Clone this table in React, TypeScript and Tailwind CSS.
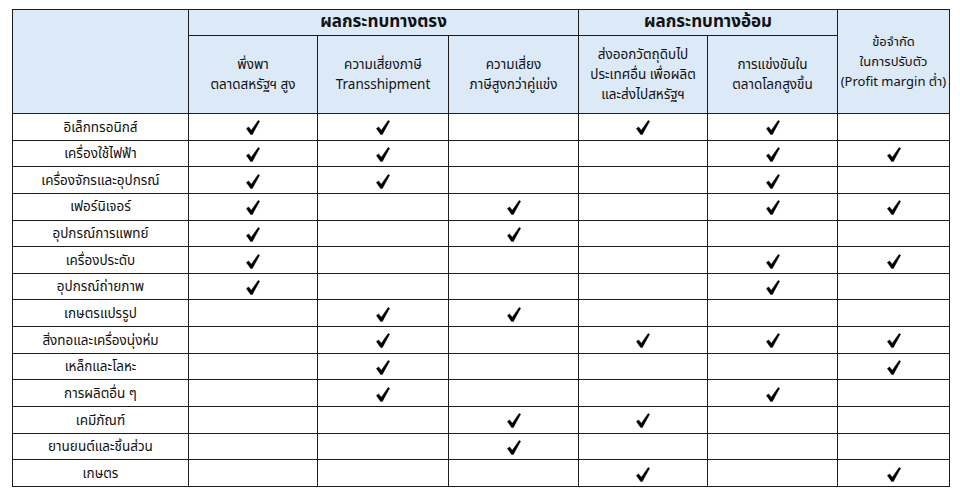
import React from "react";

const rows: [string, number[]][] = [
  ["อิเล็กทรอนิกส์", [1, 2, 4, 5]],
  ["เครื่องใช้ไฟฟ้า", [1, 2, 5, 6]],
  ["เครื่องจักรและอุปกรณ์", [1, 2, 5]],
  ["เฟอร์นิเจอร์", [1, 3, 5, 6]],
  ["อุปกรณ์การแพทย์", [1, 3]],
  ["เครื่องประดับ", [1, 5, 6]],
  ["อุปกรณ์ถ่ายภาพ", [1, 5]],
  ["เกษตรแปรรูป", [2, 3]],
  ["สิ่งทอและเครื่องนุ่งห่ม", [2, 4, 5, 6]],
  ["เหล็กและโลหะ", [2, 6]],
  ["การผลิตอื่น ๆ", [2, 5]],
  ["เคมีภัณฑ์", [3, 4]],
  ["ยานยนต์และชิ้นส่วน", [3]],
  ["เกษตร", [4, 6]],
];

function Check() {
  return (
    <svg width="14" height="15" viewBox="0 0 12.5 13.5" className="inline-block">
      <path
        d="M0.3 7.7 L2.3 6.2 L4.7 9.3 L10.9 0.4 L12.2 1.1 L5.7 13 L4.1 13 Z"
        fill="#000"
        stroke="#000"
        strokeWidth="0.4"
        strokeLinejoin="round"
      />
    </svg>
  );
}

const font = { fontFamily: '"Noto Sans Thai", Tahoma, "Leelawadee UI", "Noto Sans", sans-serif' };

export default function App() {
  const cell = "border border-[#1c1c1c] text-center align-middle p-0";
  const head = cell + " bg-[#dce9f6]";
  const sub = head + " text-[13.5px] font-normal leading-[20px]";
  return (
    <div className="w-[960px] h-[500px] bg-white pt-[9px] pl-[12px]" style={font}>
      <table className="table-fixed border-collapse text-[#111]">
        <colgroup>
          <col className="w-[176px]" />
          <col className="w-[129px]" />
          <col className="w-[131px]" />
          <col className="w-[130px]" />
          <col className="w-[129px]" />
          <col className="w-[130px]" />
          <col className="w-[112px]" />
        </colgroup>
        <thead>
          <tr className="h-[26px]">
            <th rowSpan={2} className={head}></th>
            <th colSpan={3} className={head + " text-[17px] font-bold leading-none"}>
              ผลกระทบทางตรง
            </th>
            <th colSpan={2} className={head + " text-[17px] font-bold leading-none"}>
              ผลกระทบทางอ้อม
            </th>
            <th rowSpan={2} className={head + " text-[13px] font-normal leading-[20px]"}>
              ข้อจำกัด
              <br />
              ในการปรับตัว
              <br />
              (Profit margin ต่ำ)
            </th>
          </tr>
          <tr className="h-[78px]">
            <th className={sub}>
              พึ่งพา
              <br />
              ตลาดสหรัฐฯ สูง
            </th>
            <th className={sub}>
              ความเสี่ยงภาษี
              <br />
              Transshipment
            </th>
            <th className={sub}>
              ความเสี่ยง
              <br />
              ภาษีสูงกว่าคู่แข่ง
            </th>
            <th className={sub}>
              ส่งออกวัตถุดิบไป
              <br />
              ประเทศอื่น เพื่อผลิต
              <br />
              และส่งไปสหรัฐฯ
            </th>
            <th className={sub}>
              การแข่งขันใน
              <br />
              ตลาดโลกสูงขึ้น
            </th>
          </tr>
        </thead>
        <tbody>
          {rows.map(([name, cols]) => (
            <tr key={name} className="h-[26.65px]">
              <td className={cell + " text-[13.5px] leading-none pt-[3px]"}>{name}</td>
              {[1, 2, 3, 4, 5, 6].map((c) => (
                <td key={c} className={cell + " leading-none pt-[1px]"}>
                  {cols.includes(c) ? <Check /> : null}
                </td>
              ))}
            </tr>
          ))}
        </tbody>
      </table>
    </div>
  );
}
